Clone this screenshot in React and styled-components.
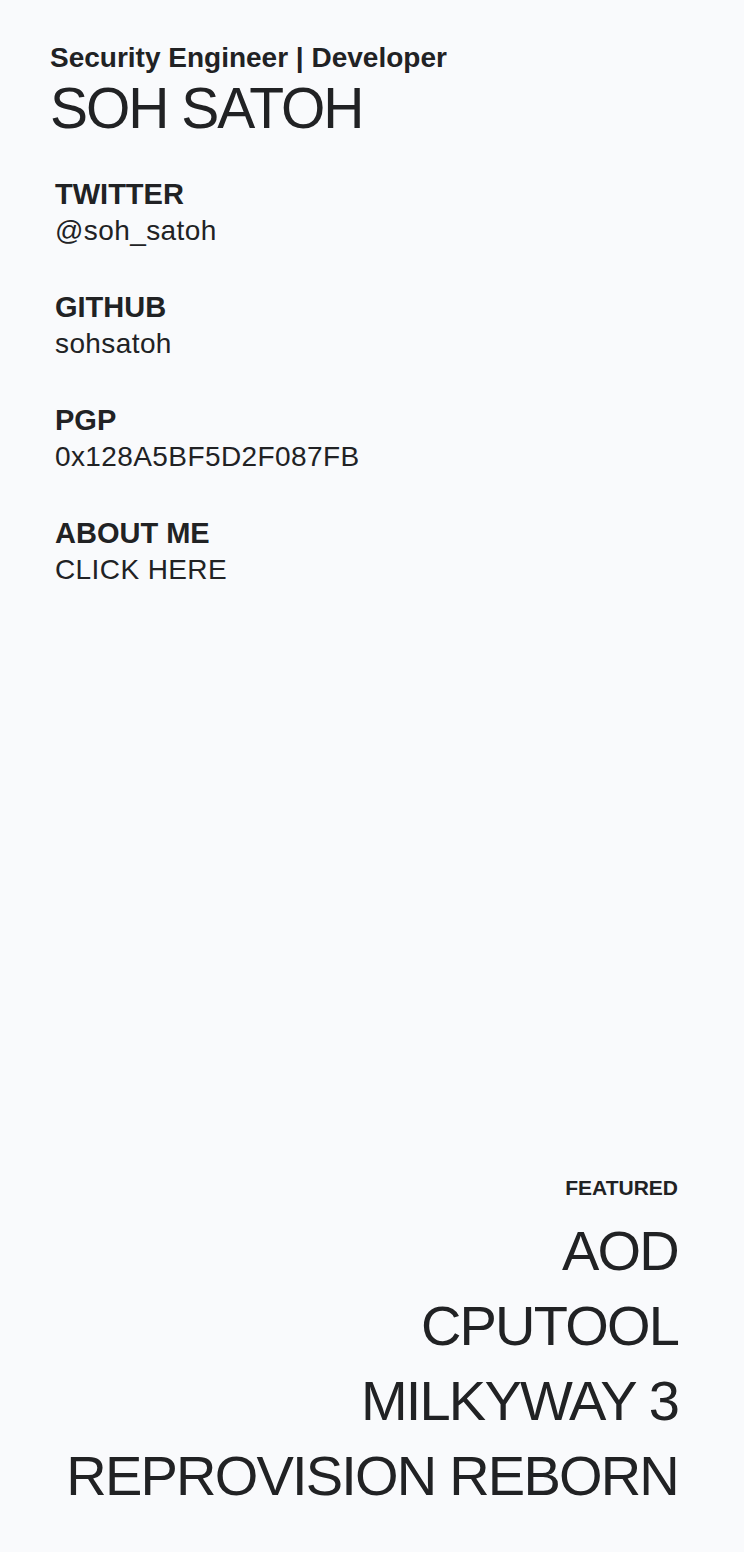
import styled, { createGlobalStyle } from "styled-components";

const GlobalStyle = createGlobalStyle`
  html, body {
    margin: 0;
    padding: 0;
    background: #f9fafc;
  }
  body {
    font-family: "Liberation Sans", Arial, Helvetica, sans-serif;
    color: #212224;
  }
`;

const links = [
  { label: "TWITTER", value: "@soh_satoh" },
  { label: "GITHUB", value: "sohsatoh" },
  { label: "PGP", value: "0x128A5BF5D2F087FB" },
  { label: "ABOUT ME", value: "CLICK HERE" },
];

const featured = ["AOD", "CPUTOOL", "MILKYWAY 3", "REPROVISION REBORN"];

export default function App() {
  return (
    <>
      <GlobalStyle />
      <Page>
        <Top>
          <Header>
            <Subtitle>Security Engineer | Developer</Subtitle>
            <Name>SOH SATOH</Name>
          </Header>
          <Links>
            {links.map((l) => (
              <LinkItem key={l.label}>
                <Label>{l.label}</Label>
                <Value>{l.value}</Value>
              </LinkItem>
            ))}
          </Links>
        </Top>

        <Featured>
          <FeaturedTitle>FEATURED</FeaturedTitle>
          {featured.map((f) => (
            <Project key={f}>{f}</Project>
          ))}
        </Featured>
      </Page>
    </>
  );
}

const Page = styled.div`
  min-height: 100vh;
  box-sizing: border-box;
  padding: 38px 66px 39px 50px;
  display: flex;
  flex-direction: column;
  justify-content: space-between;
`;

const Top = styled.div`
  display: flex;
  flex-direction: column;
`;

const Header = styled.div`
  display: flex;
  flex-direction: column;
`;

const Subtitle = styled.div`
  font-size: 28px;
  font-weight: 700;
  line-height: 39px;
`;

const Name = styled.h1`
  margin: 0;
  font-size: 57px;
  font-weight: 400;
  line-height: 62px;
  letter-spacing: -2px;
`;

const Links = styled.div`
  display: flex;
  flex-direction: column;
  gap: 39px;
  margin-top: 36px;
  padding-left: 5px;
`;

const LinkItem = styled.div`
  display: flex;
  flex-direction: column;
`;

const Label = styled.div`
  font-size: 29px;
  font-weight: 700;
  line-height: 38px;
`;

const Value = styled.div`
  font-size: 28px;
  font-weight: 400;
  line-height: 36px;
  letter-spacing: 0.4px;
`;

const Featured = styled.div`
  display: flex;
  flex-direction: column;
  align-items: flex-end;
`;

const FeaturedTitle = styled.div`
  font-size: 21px;
  font-weight: 700;
  line-height: 26px;
  margin-bottom: 12px;
`;

const Project = styled.div`
  font-size: 56px;
  font-weight: 400;
  line-height: 75px;
  letter-spacing: -1.8px;
`;
